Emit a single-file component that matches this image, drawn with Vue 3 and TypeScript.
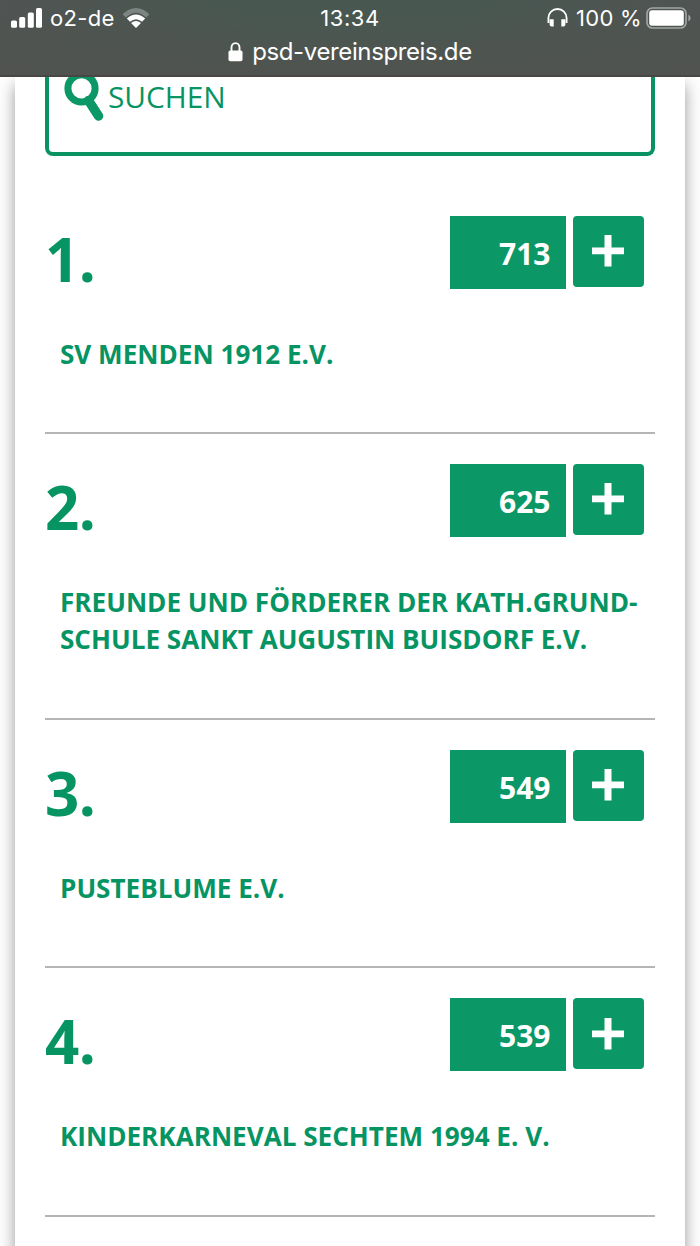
<script setup lang="ts">
interface Club {
  votes: number
  lines: string[]
}

const clubs: Club[] = [
  { votes: 713, lines: ['SV MENDEN 1912 E.V.'] },
  { votes: 625, lines: ['FREUNDE UND FÖRDERER DER KATH.GRUND-', 'SCHULE SANKT AUGUSTIN BUISDORF E.V.'] },
  { votes: 549, lines: ['PUSTEBLUME E.V.'] },
  { votes: 539, lines: ['KINDERKARNEVAL SECHTEM 1994 E. V.'] },
]
</script>

<template>
  <div class="screen">
    <header class="browser-bar">
      <div class="status">
        <div class="carrier">
          <svg class="signal" width="32" height="20" viewBox="0 0 32 20" fill="#fff">
            <rect x="0" y="12.5" width="6" height="7.3" rx="1.6" />
            <rect x="8.2" y="9" width="6" height="10.8" rx="1.6" />
            <rect x="16.8" y="4.5" width="6" height="15.3" rx="1.6" />
            <rect x="25" y="0" width="6" height="19.8" rx="1.6" />
          </svg>
          <span class="carrier-name">o2-de</span>
          <svg class="wifi" width="28" height="22" viewBox="0 0 28 22">
            <path d="M0.6 7.2Q14 -5.2 27.4 7.2L24.2 10.5Q14 1 3.8 10.5Z" fill="#7d8582" />
            <path d="M4.8 11.6Q14 3.4 23.2 11.6L20 14.8Q14 9.8 8 14.8Z" fill="#fff" />
            <path d="M9 15.9Q14 12 19 15.9L14 21Z" fill="#fff" />
          </svg>
        </div>
        <span class="clock">13:34</span>
        <div class="power">
          <svg class="headphones" width="21" height="20" viewBox="0 0 21 20">
            <path d="M1.4 15V10A9.1 9 0 0 1 19.6 10V15" fill="none" stroke="#fff" stroke-width="1.8" />
            <path d="M2.6 11.3H6.7V18.5H4.6Q2.6 18.5 2.6 16.5ZM18.4 11.3H14.3V18.5H16.4Q18.4 18.5 18.4 16.5Z" fill="#fff" />
          </svg>
          <span class="percent">100 %</span>
          <svg class="battery" width="46" height="22" viewBox="0 0 46 22">
            <rect x="1" y="1" width="39" height="20" rx="5.5" fill="none" stroke="#a0a6a3" stroke-width="1.7" />
            <rect x="3.2" y="3.3" width="34.6" height="15.4" rx="3" fill="#fff" />
            <path d="M42.4 7.5Q44.6 8.5 44.6 11T42.4 14.5Z" fill="#a0a6a3" />
          </svg>
        </div>
      </div>
      <div class="address">
        <svg width="15" height="20" viewBox="0 0 15 20">
          <path d="M3.5 10V5.5A4 4.4 0 0 1 11.5 5.5V10" fill="none" stroke="#fff" stroke-width="1.9" />
          <rect x="0.5" y="8.6" width="14" height="10.6" rx="1.6" fill="#fff" />
        </svg>
        <span>psd-vereinspreis.de</span>
      </div>
    </header>

    <main class="sheet">
      <div class="search">
        <svg width="42" height="48" viewBox="0 0 42 48" fill="none" stroke="#0b9866">
          <circle cx="17.5" cy="14.4" r="13.6" stroke-width="7" />
          <path d="M24.5 26.5L34.5 42" stroke-width="9.5" stroke-linecap="round" />
        </svg>
        <span>SUCHEN</span>
      </div>
      <ol class="ranking">
        <li v-for="(club, index) in clubs" :key="club.votes" class="club">
          <div class="club-head">
            <span class="rank">{{ index + 1 }}.</span>
            <span class="votes">{{ club.votes }}</span>
            <button class="vote" type="button">
              <svg width="32" height="32" viewBox="0 0 32 32" fill="#fff">
                <path d="M12.5 0H19.5V12.4H32V19.3H19.5V31.5H12.5V19.3H0V12.4H12.5Z" />
              </svg>
            </button>
          </div>
          <div class="club-name">
            <div v-for="line in club.lines" :key="line">{{ line }}</div>
          </div>
        </li>
      </ol>
    </main>
  </div>
</template>

<style>
body {
  margin: 0;
  background: #fff;
}
</style>

<style scoped>
.screen {
  height: 1246px;
  overflow: hidden;
  background: #fefefe;
  font-family: "Open Sans", "Noto Sans", sans-serif;
  color: #069463;
}
.browser-bar {
  position: relative;
  z-index: 1;
  box-sizing: border-box;
  height: 77px;
  border-bottom: 2px solid #484746;
  background: linear-gradient(to bottom, rgba(80, 80, 79, 0) 10%, #50534f 100%),
    linear-gradient(to right, #505452, #485851 38%, #485851 65%, #505452);
  color: #fff;
  font-family: Inter, "Liberation Sans", sans-serif;
}
.status {
  display: grid;
  grid-template-columns: 1fr auto 1fr;
  align-items: center;
  height: 36px;
  padding: 0 9px 0 11px;
  font-size: 22px;
  line-height: 36px;
}
.carrier,
.power {
  display: flex;
  align-items: center;
}
.power {
  justify-content: flex-end;
}
.carrier-name {
  margin-left: 7px;
  letter-spacing: 0.3px;
}
.wifi {
  margin-left: 7px;
}
.clock {
  margin-left: -2px;
  letter-spacing: 0.6px;
}
.power {
  margin-right: -1px;
}
.percent {
  margin: 0 4px 0 8px;
  letter-spacing: 0.3px;
}
.address {
  display: flex;
  align-items: center;
  justify-content: center;
  gap: 9px;
  height: 31px;
  font-size: 24px;
  line-height: 31px;
  letter-spacing: -0.38px;
}
.sheet {
  box-sizing: border-box;
  height: 1200px;
  margin: 0 15px;
  padding: 0 30px;
  background: #fff;
  box-shadow: 0 8px 15px rgba(0, 0, 0, 0.4);
}
.search {
  box-sizing: border-box;
  display: flex;
  height: 79px;
  padding-left: 15px;
  border: solid #0a9263;
  border-width: 0 4px 4px;
  border-radius: 0 0 8px 8px;
  font-size: 29.8px;
  line-height: 40px;
}
.search svg {
  margin-top: -3px;
}
.search span {
  margin-left: 2px;
}
.ranking {
  margin: 29.5px 0 0;
  padding: 0;
  list-style: none;
}
.club {
  padding: 30px 0 59.2px;
  border-bottom: 2px solid #b5b5b5;
}
.club-head {
  display: flex;
  align-items: flex-start;
  height: 89px;
  padding-right: 11px;
}
.rank {
  flex: 1;
  font-size: 60px;
  font-weight: 700;
  line-height: 86px;
  letter-spacing: -0.5px;
}
.votes {
  box-sizing: border-box;
  width: 116px;
  height: 73px;
  padding-right: 15.5px;
  background: #0b9866;
  color: #fff;
  font-size: 30px;
  font-weight: 700;
  line-height: 76px;
  text-align: right;
}
.vote {
  display: flex;
  justify-content: center;
  width: 71px;
  height: 71px;
  margin-left: 7px;
  padding: 19.5px 1px 0 0;
  border: 0;
  border-radius: 4px;
  background: #0b9866;
}
.club-name {
  padding: 31px 15px 0;
  font-size: 26.1px;
  font-weight: 700;
  line-height: 37.3px;
  white-space: nowrap;
}
</style>
